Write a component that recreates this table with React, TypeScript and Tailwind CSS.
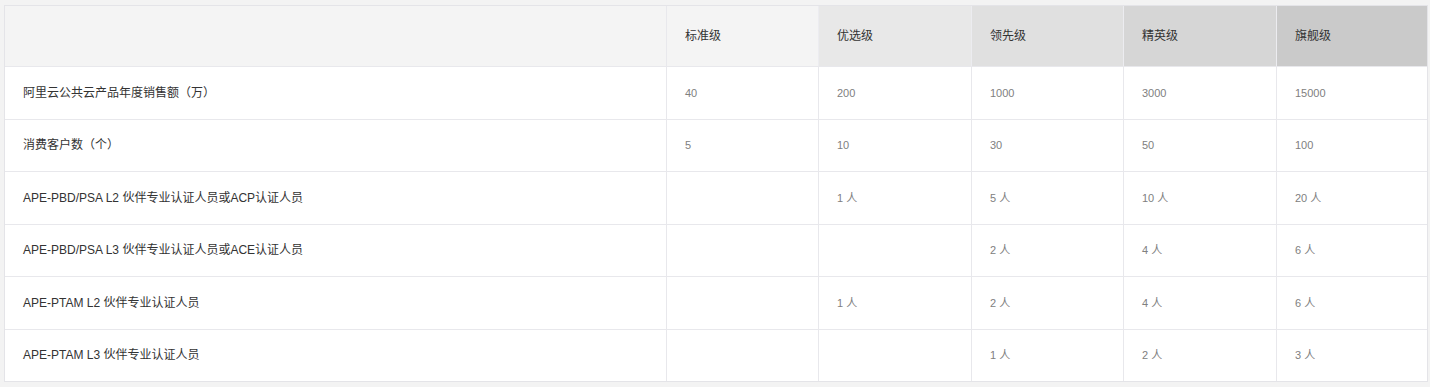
import React from 'react';

const levels = [
  { name: '标准级', bg: 'bg-[#f4f4f4]' },
  { name: '优选级', bg: 'bg-[#e8e8e8]' },
  { name: '领先级', bg: 'bg-[#e0e0e0]' },
  { name: '精英级', bg: 'bg-[#d6d6d6]' },
  { name: '旗舰级', bg: 'bg-[#cacaca]' },
];

const rows: { label: string; values: string[] }[] = [
  { label: '阿里云公共云产品年度销售额（万）', values: ['40', '200', '1000', '3000', '15000'] },
  { label: '消费客户数（个）', values: ['5', '10', '30', '50', '100'] },
  { label: 'APE-PBD/PSA L2 伙伴专业认证人员或ACP认证人员', values: ['', '1 人', '5 人', '10 人', '20 人'] },
  { label: 'APE-PBD/PSA L3 伙伴专业认证人员或ACE认证人员', values: ['', '', '2 人', '4 人', '6 人'] },
  { label: 'APE-PTAM L2 伙伴专业认证人员', values: ['', '1 人', '2 人', '4 人', '6 人'] },
  { label: 'APE-PTAM L3 伙伴专业认证人员', values: ['', '', '1 人', '2 人', '3 人'] },
];

const App: React.FC = () => {
  return (
    <div
      className="w-[1430px] h-[387px] bg-[#f3f3f3] pt-[5px] pl-[4px] pr-[2px]"
      style={{ fontFamily: '"Liberation Sans", "Noto Sans CJK SC", sans-serif' }}
    >
      <div className="border border-[#e4e4e8] bg-white text-[12px]">
        {/* header */}
        <div className="grid grid-cols-[662px_152px_153px_152px_153px_1fr] h-[60px]">
          <div className="bg-[#f4f4f4] border-r border-[#e8e8ec]" />
          {levels.map((l, i) => (
            <div
              key={l.name}
              className={`${l.bg} flex items-center pl-[18px] text-[#333] ${i < 4 ? 'border-r border-[#ececf0]' : ''}`}
            >
              {l.name}
            </div>
          ))}
        </div>

        {rows.map((r, ri) => (
          <div
            key={r.label}
            className={`grid grid-cols-[662px_152px_153px_152px_153px_1fr] h-[52.5px] border-t border-[#e8e8ec] ${ri === rows.length - 1 ? 'h-[51.5px]' : ''}`}
          >
            <div className="flex items-center pl-[18px] text-[#333] border-r border-[#e8e8ec]">
              {r.label}
            </div>
            {r.values.map((v, i) => (
              <div
                key={i}
                className={`flex items-center pl-[18px] text-[11px] text-[#808080] ${i < 4 ? 'border-r border-[#e8e8ec]' : ''}`}
              >
                {v}
              </div>
            ))}
          </div>
        ))}
      </div>
    </div>
  );
};

export default App;
